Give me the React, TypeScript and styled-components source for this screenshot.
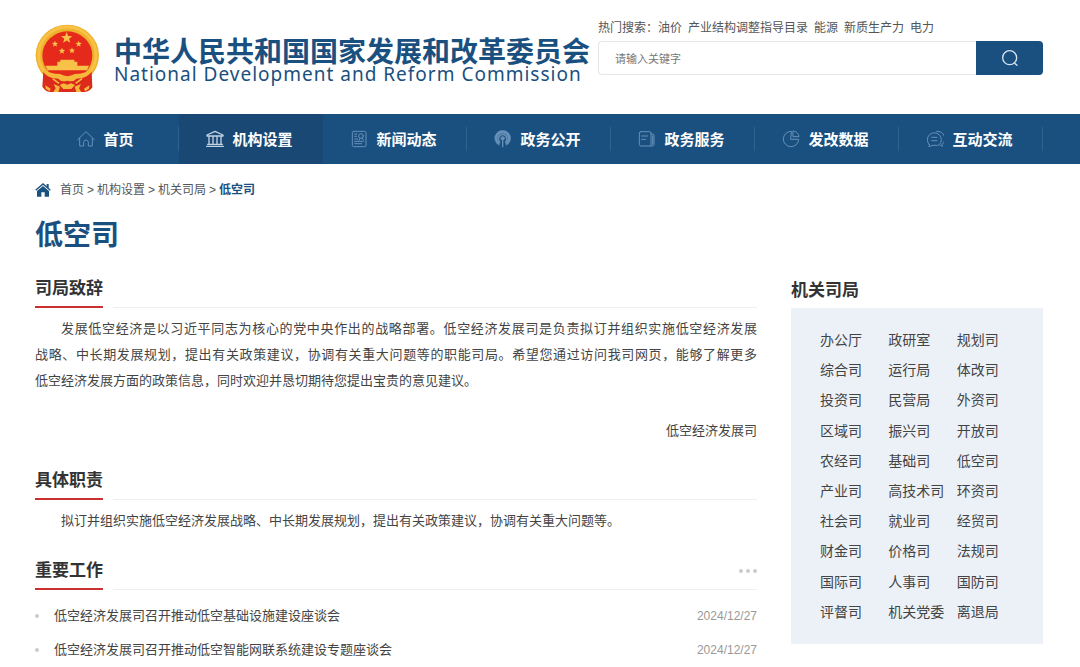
import React from 'react';
import styled, { createGlobalStyle } from 'styled-components';

const blue = '#1a5080';
const sans = `'Noto Sans CJK SC', sans-serif`;

const GlobalStyle = createGlobalStyle`
  *, *::before, *::after { box-sizing: border-box; }
  body {
    margin: 0;
    background: #fff;
    color: #444;
    font-family: 'Liberation Sans', ${sans};
    font-size: 13px;
  }
  a { color: inherit; text-decoration: none; }
  h1, h2, p, ul, ol { margin: 0; padding: 0; }
  ul, ol { list-style: none; }
`;

const Header = styled.header`
  display: flex;
  align-items: flex-start;
  gap: 8px;
  padding: 18px 37px 21px 35px;
`;

const Brand = styled.a`
  display: flex;
  align-items: flex-start;
  gap: 14px;
  flex: none;
  padding-top: 6px;
  color: ${blue};
`;

const BrandText = styled.span`
  display: flex;
  flex-direction: column;
  padding-top: 11px;
  white-space: nowrap;
`;

const BrandName = styled.span`
  font: 700 28px/30px ${sans};
`;

const BrandEnglish = styled.span`
  font: 400 19px/18px 'Noto Sans', sans-serif;
  letter-spacing: 1px;
`;

const SearchArea = styled.div`
  flex: 1;
  min-width: 0;
`;

const HotSearch = styled.p`
  display: flex;
  gap: 6px;
  font-size: 12px;
  line-height: 20px;
  padding-bottom: 3px;
  color: #555;
  white-space: nowrap;
`;

const SearchForm = styled.form`
  display: flex;
  height: 34px;
`;

const SearchInput = styled.input`
  flex: 1;
  min-width: 0;
  border: 1px solid #e6e6e6;
  border-right: 0;
  border-radius: 4px 0 0 4px;
  padding: 0 16px;
  font: 400 11px/16px ${sans};
  outline: none;
  &::placeholder { color: #777; }
`;

const SearchButton = styled.button`
  display: flex;
  align-items: center;
  justify-content: center;
  width: 67px;
  border: 0;
  border-radius: 0 4px 4px 0;
  background: ${blue};
  color: #d5e2ee;
  cursor: pointer;
`;

const NavBar = styled.nav`
  background: ${blue};
  padding: 0 37px 0 35px;
`;

const NavList = styled.ul`
  display: grid;
  grid-template-columns: repeat(7, 1fr);
`;

const NavItem = styled.li<{ $active?: boolean }>`
  display: flex;
  align-items: center;
  height: 50px;
  background: ${p => (p.$active ? '#194874' : 'transparent')};
  &::after {
    content: '';
    width: 1px;
    height: 24px;
    background: ${p => (p.$active ? 'transparent' : '#2f618e')};
  }
`;

const NavLink = styled.a<{ $active?: boolean }>`
  display: flex;
  flex: 1;
  align-items: center;
  justify-content: center;
  gap: 8px;
  padding-right: 2px;
  color: #fff;
  font: 700 15px/50px ${sans};
  white-space: nowrap;
  svg { color: ${p => (p.$active ? '#c3d3e3' : '#6790b8')}; }
`;

const Page = styled.div`
  padding: 16px 37px 0 35px;
`;

const Breadcrumb = styled.nav`
  display: flex;
  align-items: center;
  gap: 3px;
  font-size: 12px;
  line-height: 20px;
  color: #555;
  svg { margin-right: 6px; }
`;

const Current = styled.a`
  color: ${blue};
  font-weight: 700;
`;

const Title = styled.h1`
  padding-top: 13px;
  color: ${blue};
  font: 700 28px/40px ${sans};
`;

const Columns = styled.div`
  display: grid;
  grid-template-columns: minmax(0, 1fr) 252px;
  gap: 34px;
  padding-top: 19px;
`;

const SectionHead = styled.div`
  display: flex;
  align-items: stretch;
  gap: 10px;
  height: 36px;
`;

const SectionTitle = styled.h2`
  border-bottom: 2px solid #c9302f;
  color: #333;
  font: 700 17px/30px ${sans};
`;

const SectionRule = styled.div`
  display: flex;
  flex: 1;
  justify-content: flex-end;
  align-items: center;
  padding-bottom: 2px;
  border-bottom: 1px solid #eee;
`;

const MoreLink = styled.a`
  display: flex;
  gap: 3px;
  i { width: 4px; height: 4px; border-radius: 2px; background: #ccc; }
`;

const Article = styled.p<{ $gap: number }>`
  padding: 8px 0 ${p => p.$gap}px;
  font-size: 13px;
  line-height: 26px;
  text-indent: 2em;
`;

const Line = styled.span<{ $full?: boolean; $first?: boolean }>`
  display: block;
  text-indent: ${p => (p.$first ? '2em' : '0')};
  text-align: justify;
  text-align-last: ${p => (p.$full ? 'justify' : 'left')};
`;

const Signature = styled.p`
  padding-bottom: 20px;
  line-height: 26px;
  text-align: right;
`;

const NewsList = styled.ul`
  padding-top: 9px;
`;

const NewsItem = styled.li`
  display: flex;
  align-items: center;
  line-height: 34px;
  &::before {
    content: '';
    width: 4px;
    height: 4px;
    margin-right: 15px;
    border-radius: 2px;
    background: #ccc;
  }
  a { flex: 1; }
  time { color: #999; font-size: 12px; }
`;

const SideTitle = styled.h2`
  padding-bottom: 2px;
  color: #333;
  font: 700 17px/34px ${sans};
`;

const Departments = styled.ul`
  display: grid;
  grid-template-columns: repeat(3, 1fr);
  grid-auto-rows: 1fr;
  align-items: center;
  min-height: 336px;
  padding: 16px 18px 18px 29px;
  background: #ecf1f8;
  color: #444;
  font-size: 14px;
  white-space: nowrap;
`;

const Emblem = () => {
  const star = (x: number, y: number, r: number) =>
    Array.from({ length: 10 }, (_, i) => {
      const a = (Math.PI * i) / 5 - Math.PI / 2;
      const d = i % 2 ? r * 0.42 : r;
      return `${(x + d * Math.cos(a)).toFixed(1)},${(y + d * Math.sin(a)).toFixed(1)}`;
    }).join(' ');
  return (
    <svg width="65" height="69" viewBox="0 0 195 207" role="img" aria-label="国徽">
      <ellipse cx="97" cy="94" rx="95" ry="92" fill="#efb12d" />
      <ellipse cx="97" cy="93" rx="86" ry="84" fill="none" stroke="#f8c246" strokeWidth="9" />
      <ellipse cx="97" cy="95" rx="75" ry="73" fill="#e52a1b" />
      <path d="M25 144 Q50 160 78 164 H116 Q144 160 170 144 L172 190 Q164 203 149 204 H45 Q31 202 22 188Z" fill="#dc2a1c" />
      <polygon points={star(95, 42, 18)} fill="#f8c248" />
      {[[60, 60], [131, 60], [81, 81], [111, 80]].map(([x, y]) => (
        <polygon key={x} points={star(x, y, 10)} fill="#f8c248" />
      ))}
      <path d="M76 107 H118 V113 H127 V125 H162 L156 139 H38 L31 125 H67 V113 H76Z" fill="#f8c248" />
      <path d="M22 138 Q42 146 60 149 L80 150 Q90 144 97 150 Q104 144 114 150 L134 149 Q152 146 172 138 Q164 156 142 162 L124 164 Q115 176 97 170 Q79 176 70 164 L52 162 Q30 156 22 138Z" fill="#f5b83b" />
      <path d="M76 151 Q97 162 118 151 L112 147 H82Z" fill="#e52a1b" />
      <path d="M53 164 L72 178 M141 164 L122 178" stroke="#f5b83b" strokeWidth="5" />
      <path d="M74 183 L86 178 L97 182 L108 178 L120 183 L109 195 H85Z" fill="#f5b83b" />
      <path d="M56 180 L75 188 L70 204 H55 L62 193Z M138 180 L119 188 L124 204 H139 L132 193Z M31 184 L47 194 L44 202 L32 194Z M163 184 L147 194 L150 202 L162 194Z" fill="#f5b83b" />
    </svg>
  );
};

const Icon = ({ children }: { children: React.ReactNode }) => (
  <svg width="18" height="18" viewBox="0 0 54 54" fill="none" stroke="currentColor" strokeWidth="3" strokeLinecap="round" strokeLinejoin="round" aria-hidden="true">
    {children}
  </svg>
);

const navItems: { label: string; icon: React.ReactNode; active?: boolean }[] = [
  { label: '首页', icon: <path d="M2 29 L27 5 L52 29 M8 25 V48 H20 V37 a7 7 0 0 1 14 0 V48 H46 V25" /> },
  {
    label: '机构设置',
    active: true,
    icon: <path d="M3 15 L27 4 L51 15 V18 H3Z M9 19 V42 M21 19 V42 M33 19 V42 M45 19 V42 M5 43 H49 M2 49 H52" strokeWidth="4" />,
  },
  {
    label: '新闻动态',
    icon: (
      <>
        <rect x="7" y="4" width="41" height="46" rx="4" />
        <circle cx="33" cy="18" r="7" />
        <path d="M14 12 H20 M14 19 H20 M14 27 H23 M14 34 H40 M14 41 H35 M30 25 L27 31 M37 24 L40 30" />
      </>
    ),
  },
  {
    label: '政务公开',
    icon: (
      <>
        <path d="M15 46 A24 24 0 1 1 37 46 L35 39 A16 16 0 1 0 17 39Z" fill="currentColor" strokeWidth="1" />
        <path d="M17 36 A13 13 0 1 1 35 36" strokeWidth="5" />
        <circle cx="26" cy="25" r="5" fill="currentColor" />
        <path d="M26 27 V50" strokeWidth="4" />
      </>
    ),
  },
  {
    label: '政务服务',
    icon: <path d="M8 5 H35 Q39 5 39 9 V48 H9 Q4 48 4 43 V9 Q4 5 8 5Z M11 18 H29 M11 28 H23 M39 12 H44 Q48 12 48 16 V44 Q48 48 43 48 H39 M44 17 V43" />,
  },
  {
    label: '发改数据',
    icon: <path d="M27 4 A23 23 0 1 0 50 28 H27Z M34 3 A20 20 0 0 1 51 20 H34Z" />,
  },
  {
    label: '互动交流',
    icon: <path d="M10 44 A21 21 0 1 1 40 44 Q36 47 32 46 H18 Q15 50 8 49 Q11 47 10 44Z M17 22 H33 M17 32 H33 M32 4 A22 22 0 0 1 48 43 Q49 46 51 48 Q46 49 43 46" />,
  },
];

const hotWords = ['油价', '产业结构调整指导目录', '能源', '新质生产力', '电力'];

const departments = [
  '办公厅', '政研室', '规划司', '综合司', '运行局', '体改司', '投资司', '民营局', '外资司', '区域司',
  '振兴司', '开放司', '农经司', '基础司', '低空司', '产业司', '高技术司', '环资司', '社会司', '就业司',
  '经贸司', '财金司', '价格司', '法规司', '国际司', '人事司', '国防司', '评督司', '机关党委', '离退局',
];

const news = [
  { title: '低空经济发展司召开推动低空基础设施建设座谈会', date: '2024/12/27' },
  { title: '低空经济发展司召开推动低空智能网联系统建设专题座谈会', date: '2024/12/27' },
];

const Heading = ({ title, more }: { title: string; more?: boolean }) => (
  <SectionHead>
    <SectionTitle>{title}</SectionTitle>
    <SectionRule>
      {more && <MoreLink href="#" aria-label="更多"><i /><i /><i /></MoreLink>}
    </SectionRule>
  </SectionHead>
);

export default function App() {
  return (
    <>
      <GlobalStyle />
      <Header>
        <Brand href="#">
          <Emblem />
          <BrandText>
            <BrandName>中华人民共和国国家发展和改革委员会</BrandName>
            <BrandEnglish>National Development and Reform Commission</BrandEnglish>
          </BrandText>
        </Brand>
        <SearchArea>
          <HotSearch>
            <span>热门搜索：<a href="#">{hotWords[0]}</a></span>
            {hotWords.slice(1).map(w => <a href="#" key={w}>{w}</a>)}
          </HotSearch>
          <SearchForm onSubmit={e => e.preventDefault()}>
            <SearchInput type="text" placeholder="请输入关键字" aria-label="请输入关键字" />
            <SearchButton type="submit" aria-label="搜索">
              <svg width="18" height="18" viewBox="0 0 54 54" fill="none" stroke="currentColor" strokeWidth="4" strokeLinecap="round">
                <circle cx="26" cy="26" r="21" />
                <path d="M40 42 L48 49" />
              </svg>
            </SearchButton>
          </SearchForm>
        </SearchArea>
      </Header>
      <NavBar>
        <NavList>
          {navItems.map(n => (
            <NavItem key={n.label} $active={n.active}>
              <NavLink href="#" $active={n.active}>
                <Icon>{n.icon}</Icon>
                {n.label}
              </NavLink>
            </NavItem>
          ))}
        </NavList>
      </NavBar>
      <Page>
        <Breadcrumb>
          <svg width="16" height="14" viewBox="0 0 48 42" fill={blue} aria-hidden="true">
            <path d="M24 9 L42 24 V41 H29 V28 H19 V41 H6 V24Z" />
            <path d="M2 22 L24 3 L46 22" fill="none" stroke={blue} strokeWidth="4" />
            <path d="M35 3 H41 V16 L35 11Z" />
          </svg>
          <a href="#">首页</a>&gt;<a href="#">机构设置</a>&gt;<a href="#">机关司局</a>&gt;
          <Current href="#">低空司</Current>
        </Breadcrumb>
        <Title>低空司</Title>
        <Columns>
          <main>
            <Heading title="司局致辞" />
            <Article $gap={24}>
              <Line $full $first>发展低空经济是以习近平同志为核心的党中央作出的战略部署。低空经济发展司是负责拟订并组织实施低空经济发展</Line>
              <Line $full>战略、中长期发展规划，提出有关政策建议，协调有关重大问题等的职能司局。希望您通过访问我司网页，能够了解更多</Line>
              <Line>低空经济发展方面的政策信息，同时欢迎并恳切期待您提出宝贵的意见建议。</Line>
            </Article>
            <Signature>低空经济发展司</Signature>
            <Heading title="具体职责" />
            <Article $gap={20}>拟订并组织实施低空经济发展战略、中长期发展规划，提出有关政策建议，协调有关重大问题等。</Article>
            <Heading title="重要工作" more />
            <NewsList>
              {news.map(n => (
                <NewsItem key={n.title}>
                  <a href="#">{n.title}</a>
                  <time>{n.date}</time>
                </NewsItem>
              ))}
            </NewsList>
          </main>
          <aside>
            <SideTitle>机关司局</SideTitle>
            <Departments>
              {departments.map(d => <li key={d}><a href="#">{d}</a></li>)}
            </Departments>
          </aside>
        </Columns>
      </Page>
    </>
  );
}
